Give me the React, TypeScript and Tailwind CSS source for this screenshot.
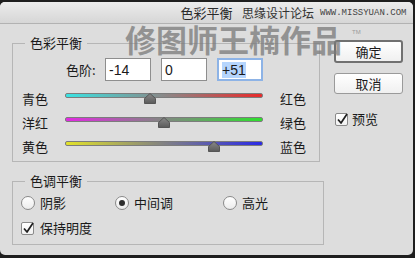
import React from 'react'

const cjk = "font-['Noto_Sans_CJK_SC',_'Noto_Sans',_sans-serif]"

const sliders = [
  { left: '青色', right: '红色', value: -14, track: 'bg-[linear-gradient(to_right,#3ae2e2,#8a8888_50%,#e82a2a)]' },
  { left: '洋红', right: '绿色', value: 0, track: 'bg-[linear-gradient(to_right,#e22ae2,#8a7f8a_45%,#2ee02e)]' },
  { left: '黄色', right: '蓝色', value: 51, track: 'bg-[linear-gradient(to_right,#e2e22a,#8a8a7a_45%,#2a2ae6)]' },
]

const levels = [
  { value: '-14', focused: false },
  { value: '0', focused: false },
  { value: '+51', focused: true },
]

const tones = [
  { label: '阴影', checked: false, width: 'w-[94px]' },
  { label: '中间调', checked: true, width: 'w-[108px]' },
  { label: '高光', checked: false, width: 'w-[100px]' },
]

function Check() {
  return (
    <span className="relative flex h-[13px] w-[13px] shrink-0 rounded-[2px] border border-[#8a8a8a] bg-[linear-gradient(#ffffff,#f1f1f1)]">
      <svg width="14" height="14" viewBox="0 0 14 14" className="absolute -left-[1px] -top-[2px]">
        <path d="M3 7.5 L6 11 L12 2" fill="none" stroke="#1f1f1f" strokeWidth="1.7" strokeLinejoin="round" />
      </svg>
    </span>
  )
}

function Radio({ checked }: { checked: boolean }) {
  return (
    <span className="flex h-[14px] w-[14px] shrink-0 items-center justify-center rounded-full border border-[#8a8a8a] bg-[linear-gradient(#ffffff,#ececec)]">
      {checked && <span className="h-[6px] w-[6px] rounded-full bg-[#2e2e2e]" />}
    </span>
  )
}

function Thumb({ value }: { value: number }) {
  const left = ((value + 100) / 200) * 198
  return (
    <svg
      width="12"
      height="11"
      viewBox="0 0 12 11"
      className="absolute top-[1px] -translate-x-1/2"
      style={{ left }}
    >
      <defs>
        <linearGradient id="thumb" x1="0" y1="0" x2="0" y2="1">
          <stop offset="0" stopColor="#8a8a8a" />
          <stop offset="1" stopColor="#5a5a5a" />
        </linearGradient>
      </defs>
      <path d="M6 0.5 L11.5 5.5 L11.5 10.5 L0.5 10.5 L0.5 5.5 Z" fill="url(#thumb)" stroke="#555" strokeWidth="1" />
    </svg>
  )
}

export default function App() {
  return (
    <div className={`h-[258px] w-[415px] bg-[#1e1e1e] pb-[3px] pr-[2px] pt-[2px] text-[13px] text-[#1a1a1a] ${cjk}`}>
      <div className="relative flex h-full flex-col overflow-hidden rounded-[5px] bg-[#dddddd]">
        {/* title bar */}
        <div className="relative flex h-[22px] shrink-0 items-center justify-center border-b border-[#b2b2b2] bg-[linear-gradient(#ececec,#d6d6d6)]">
          <span className="text-[13px] leading-none text-[#2a2a2a]">色彩平衡</span>
          <div className="absolute left-[242px] top-[3px] flex items-center gap-[6px]">
            <span className="text-[12px] leading-[16px] text-[#333]">思缘设计论坛</span>
            <span className="font-['Liberation_Mono',_monospace] text-[9px] leading-[16px] text-[#444]">
              WWW.MISSYUAN.COM
            </span>
          </div>
        </div>

        <div className="flex pl-[12px]">
          {/* left column */}
          <div className="w-[308px]">
            <fieldset className="mt-[11px] border border-[#b6b6b6] pb-[2px]">
              <legend className="ml-[12px] px-[5px] leading-[16px]">色彩平衡</legend>
              <div className="mt-[7px] flex items-center pl-[53px]">
                <span className="w-[39px]">色阶:</span>
                <div className="flex gap-[10px]">
                  {levels.map((l) => (
                    <div
                      key={l.value}
                      className={`flex h-[23px] w-[46px] items-center bg-white font-['Liberation_Sans',_sans-serif] text-[14px] ${
                        l.focused ? 'border-2 border-[#8db3e6] pl-[3px]' : 'border border-[#8e8e8e] pl-[3px]'
                      }`}
                    >
                      <span className={l.focused ? 'bg-[#b5d5fd] leading-[16px]' : 'leading-[16px]'}>{l.value}</span>
                    </div>
                  ))}
                </div>
              </div>
              <div className="mt-[6px]">
                {sliders.map((s) => (
                  <div key={s.left} className="flex h-[24px] items-center pl-[9px]">
                    <span className="w-[43px]">{s.left}</span>
                    <div className="relative h-[14px] w-[198px]">
                      <div className={`mt-[1px] h-[5px] rounded-[2px] border border-[#7c7c7c] ${s.track}`} />
                      <Thumb value={s.value} />
                    </div>
                    <span className="ml-[17px]">{s.right}</span>
                  </div>
                ))}
              </div>
            </fieldset>

            <fieldset className="mt-[11px] border border-[#b6b6b6] pb-[6px]">
              <legend className="ml-[12px] px-[5px] leading-[16px]">色调平衡</legend>
              <div className="mt-[4px] flex h-[20px] items-center pl-[8px]">
                {tones.map((t) => (
                  <label key={t.label} className={`flex items-center gap-[5px] ${t.width}`}>
                    <Radio checked={t.checked} />
                    <span>{t.label}</span>
                  </label>
                ))}
              </div>
              <div className="mt-[5px] flex h-[20px] items-center gap-[6px] pl-[8px]">
                <Check />
                <span>保持明度</span>
              </div>
            </fieldset>
          </div>

          {/* right column */}
          <div className="ml-[14px] flex w-[69px] flex-col">
            <button className="mt-[16px] h-[23px] rounded-[3px] border-2 border-[#707070] bg-[linear-gradient(#ffffff,#f0f0f0)] text-[13px] leading-none">
              确定
            </button>
            <button className="mt-[10px] h-[21px] rounded-[3px] border border-[#9a9a9a] bg-[linear-gradient(#ffffff,#f0f0f0)] text-[13px] leading-none">
              取消
            </button>
            <div className="mt-[17px] flex items-center gap-[4px] pl-[1px]">
              <Check />
              <span className="leading-[16px]">预览</span>
            </div>
          </div>
        </div>

        {/* watermark */}
        <div className="pointer-events-none absolute left-[125px] top-[24px] text-[31px] font-bold leading-[26px] text-[#7a7a7a]/75">
          修图师王楠作品
        </div>
        <span className="pointer-events-none absolute left-[352px] top-[26px] font-['Liberation_Sans',_sans-serif] text-[6px] leading-[8px] text-[#9a9a9a]">
          TM
        </span>
      </div>
    </div>
  )
}
